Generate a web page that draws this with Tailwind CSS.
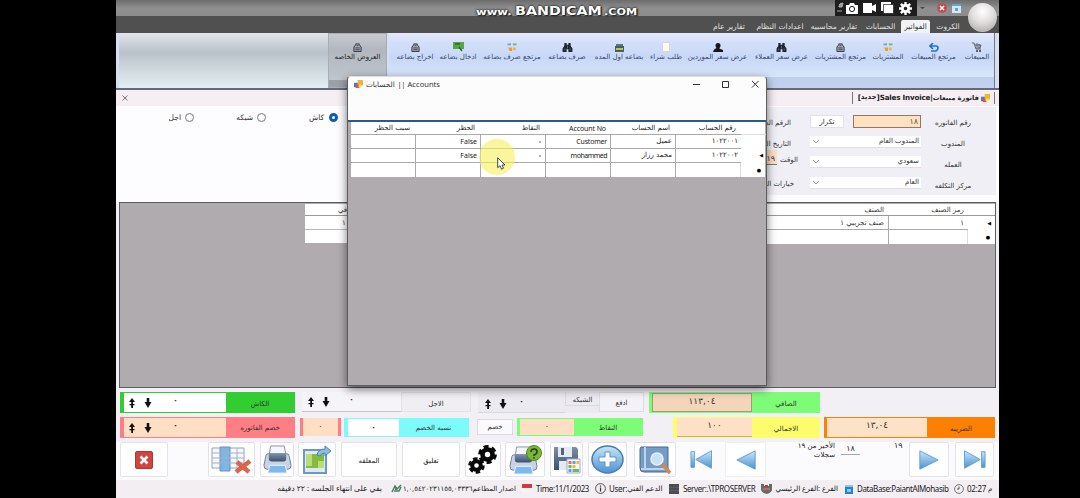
<!DOCTYPE html>
<html lang="ar">
<head>
<meta charset="utf-8">
<title>Sales Invoice</title>
<script src="https://cdn.jsdelivr.net/npm/@tailwindcss/browser@4"></script>
</head>
<body class="w-[1080px] h-[498px] overflow-hidden bg-black [font-family:'DejaVu_Sans',sans-serif] text-[7px] leading-none text-[#333] whitespace-nowrap">
<svg class="absolute w-0 h-0">
  <defs>
    <linearGradient id="blue" x1="0" y1="0" x2="0" y2="1"><stop offset="0" stop-color="#c9e6fa"/><stop offset="1" stop-color="#4c93d0"/></linearGradient>
    <linearGradient id="steel" x1="0" y1="0" x2="0" y2="1"><stop offset="0" stop-color="#7d8fa9"/><stop offset="1" stop-color="#3d506e"/></linearGradient>
  </defs>
  <symbol id="bag" viewBox="0 0 10 10"><path d="M1 4.500L3 2V1h4v1l2 2.500v5H1z" fill="#a5acbd" stroke="#2b2e38" stroke-width="1"/><path d="M2.500 5.500h5M2.500 7.500h5M4 3h2" stroke="#2b2e38" stroke-width=".9"/></symbol>
  <symbol id="people" viewBox="0 0 11 10"><path d="M2 0h2.500v2h2V0H9v3l2 3v4H6.500V7h-2v3H0V6l2-3z" fill="#1d2530"/><path d="M5 3h1v3H5zM2 6h1v2H2zM8 6h1v2H8z" fill="#59708c"/></symbol>
  <symbol id="cart4" viewBox="0 0 10 10"><path d="M0 1.500h4" stroke="#63a7cf" stroke-width="2"/><path d="M6 1.500h4" stroke="#7cb36a" stroke-width="2"/><path d="M1 5h4v4H2z" fill="#f29b25"/><path d="M6 5h3v3H6z" fill="#ecb23c"/></symbol>
  <symbol id="up" viewBox="0 0 8 10"><path d="M4 0L7 4H5v2h1.500v1.200H5V10H3.200V7.200H1.500V6h1.700V4H1z" fill="#111"/></symbol>
  <symbol id="down" viewBox="0 0 8 10"><path d="M2.700 0h2.600v4H7.500L4 10 .5 4h2.200z" fill="#111"/></symbol>
  <symbol id="win" viewBox="0 0 10 10"><path d="M0 3h5v5H0z" fill="#4d78c9"/><path d="M4 0h6v6H4z" fill="#f3b62b"/><path d="M2 5h4v4H2z" fill="#e0523b"/><path d="M5 5h3v3H5z" fill="#f9d978"/></symbol>
  <symbol id="chev" viewBox="0 0 8 5"><path d="M1 1l3 3 3-3" fill="none" stroke="#999" stroke-width=".9"/></symbol>
  <symbol id="play" viewBox="0 0 24 24"><path d="M2 2l20 10L2 22z" fill="url(#blue)" stroke="#5b9bd2" stroke-width="1"/></symbol>
  <symbol id="last" viewBox="0 0 28 24"><path d="M2 2l18 10L2 22z" fill="url(#blue)" stroke="#5b9bd2"/><path d="M21.500 3h4v18h-4z" fill="url(#blue)" stroke="#5b9bd2"/></symbol>
  <symbol id="printer" viewBox="0 0 30 30"><path d="M8 1h14l2 11H6z" fill="#f4f7fb" stroke="#8794a8"/><path d="M3 11q0-2 3-2h18q3 0 3 2l2 10q0 4-3 4H4q-3 0-3-4z" fill="#c9d3e4" stroke="#6d7f9d"/><path d="M6 9h18v5q0 3-3 3H9q-3 0-3-3z" fill="url(#steel)"/><path d="M7 21h16l2 8H5z" fill="#7fb8ea" stroke="#eef5fc"/></symbol>
</svg>

<main dir="ltr" class="relative ml-[116px] w-[883px] h-[498px] flex flex-col bg-[#f3f0f5]">
  <!-- title bar -->
  <header class="h-[16px] flex items-center bg-linear-to-b from-[#6c6c6c] via-[#8f8f8f] to-[#8d8d8d]">
    <div class="ml-[360px] w-[162px] mt-[6px] flex items-baseline text-white [text-shadow:0_0_2px_#222,0_0_2px_#222,1px_1px_1px_#222]">
      <span class="w-[39px] text-[9px] font-bold"><span class="inline-block origin-left scale-x-[1.28]">www.</span></span><span class="w-[88px] text-[12px] font-bold"><span class="inline-block origin-left scale-x-[1.19]">BANDICAM</span></span><span class="text-[8px] ml-[1px] font-bold"><span class="inline-block origin-left scale-x-[1.40]">.COM</span></span>
    </div>
    <div class="ml-[197px] w-[82px] h-[16px] bg-[#1d1d1d] flex items-center">
      <svg class="w-[9px] h-[12px]" viewBox="0 0 9 12"><path d="M4 4q0-3 4-3l-1 4H4zM2 9h5" stroke="#aaa" fill="#999"/></svg>
      <svg class="ml-[2px] w-[12px] h-[11px]" viewBox="0 0 12 11"><path d="M0 2h3l1-2h4l1 2h3v9H0z" fill="#fff"/><circle cx="6" cy="6" r="2.600" fill="#fff" stroke="#1d1d1d"/></svg>
      <svg class="ml-[5px] w-[13px] h-[10px]" viewBox="0 0 13 10"><path d="M0 0h9v3l4-2v8L9 7v3H0z" fill="#fff"/></svg>
      <svg class="ml-[5px] w-[13px] h-[12px]" viewBox="0 0 13 12"><path d="M0 0h10v9H0z" fill="#fff"/><path d="M2.500 2.500h10v9h-10z" fill="#fff" stroke="#1d1d1d" stroke-width=".7"/></svg>
      <svg class="ml-[5px] w-[13px] h-[13px]" viewBox="0 0 14 14"><path d="M7 0v14M0 7h14M2 2l10 10M12 2L2 12" stroke="#fff" stroke-width="2.600"/><circle cx="7" cy="7" r="3.400" fill="#1d1d1d" stroke="#fff" stroke-width="3"/></svg>
    </div>
    <svg class="ml-[3px] w-[5px] h-[4px]" viewBox="0 0 5 4"><path d="M0 1h5L2.500 3z" fill="#444"/></svg>
    <svg class="ml-[12px] w-[10px] h-[10px]" viewBox="0 0 10 10"><circle cx="5" cy="5" r="4.800" fill="#c9494b"/><path d="M3 3l4 4M7 3L3 7" stroke="#fff" stroke-width="1.500"/></svg>
    <svg class="ml-[5px] w-[9px] h-[9px]" viewBox="0 0 9 9"><path d="M0 0h9v9H0z" fill="#d5e8f8"/><path d="M0 0h9v2H0zM3 4h3v3H3z" fill="#5fa3e2"/></svg>
  </header>
  <div class="absolute left-[852px] top-[3px] w-[29px] h-[29px] rounded-full bg-[radial-gradient(circle_at_50%_30%,#fff,#e0dcdc_45%,#bdb9b9_75%,#e7e4e4)]"></div>

  <!-- tabs -->
  <nav class="h-[17px] bg-[#505050] flex text-[#e0e0e0] text-[7.500px]">
    <span class="ml-[590px] w-[46px] pt-[7px] text-center">تقارير عام</span>
    <span class="w-[56px] pt-[7px] text-center">اعدادات النظام</span>
    <span class="w-[52px] pt-[7px] text-center">تقارير محاسبيه</span>
    <span class="w-[41px] pt-[7px] text-center">الحسابات</span>
    <span class="mt-[4px] w-[29px] h-[13px] pt-[3px] text-center bg-[#f2f3f7] text-[#333] rounded-t-[2px]">الفواتير</span>
    <span class="w-[36px] pt-[7px] text-center">الكروت</span>
  </nav>

  <!-- ribbon -->
  <section class="h-[57px] pl-[3px] flex border-b-2 border-[#666a76] bg-[#d5e0f3] text-[7px] text-[#39456f]">
    <div class="w-[209px] bg-linear-to-b from-[#e4e5ec] via-[#bac2c9] via-35% to-[#e4f0f3]"></div>
    <div class="w-[59px] border border-[#a9adb8] bg-linear-to-b from-[#c7cad1] via-[#b2b7bf] via-30% to-[#c3c9cf] flex flex-col items-center pt-[9px] text-[#222]">
      <svg class="w-[9px] h-[9px]"><use href="#bag"/></svg><span class="mt-[2px]">العروض الخاصه</span><i class="mt-auto w-full h-[7px] bg-[#9da1a7]"></i>
    </div>
    <div class="ml-[2px] w-[606px] flex border-r border-[#777] bg-[linear-gradient(#e5e9fa,#d3dffa_18%,#c6d8f7_45%,#d9e6fb_80%,#becfea_81%,#c3d3ef)]">
      <div class="w-[47px] flex flex-col items-center pt-[10px] pl-[5px]"><svg class="w-[9px] h-[9px]"><use href="#bag"/></svg><span class="mt-[2px]">اخراج بضاعه</span></div>
      <div class="w-[44px] flex flex-col items-center pt-[9px]"><svg class="w-[11px] h-[10px]" viewBox="0 0 11 10"><path d="M0 0h11v7H0z" fill="#56a546"/><path d="M2 2h5M6 5l3 4" stroke="#2a6a2d" stroke-width="1.500"/></svg><span class="mt-[2px]">ادخال بضاعه</span></div>
      <div class="w-[64px] flex flex-col items-center pt-[10px]"><svg class="w-[10px] h-[9px]"><use href="#cart4"/></svg><span class="mt-[2px]">مرتجع صرف بضاعه</span></div>
      <div class="w-[46px] flex flex-col items-center pt-[10px]"><svg class="w-[11px] h-[9px]"><use href="#people"/></svg><span class="mt-[2px]">صرف بضاعه</span></div>
      <div class="w-[58px] flex flex-col items-center pt-[10px]"><svg class="w-[9px] h-[9px]" viewBox="0 0 9 9"><path d="M1 1h7v3H1z" fill="#5d7685"/><path d="M0 3h9v6H0z" fill="#46605b"/><path d="M1 5h7v2H1z" fill="#b9c35b"/></svg><span class="mt-[2px]">بضاعه اول المده</span></div>
      <div class="w-[36px] flex flex-col items-center pt-[9px]"><svg class="w-[8px] h-[10px]" viewBox="0 0 8 10"><path d="M.5.5h7v9h-7z" fill="#fbfaf2" stroke="#d6d6d2"/></svg><span class="mt-[2px]">طلب شراء</span></div>
      <div class="w-[67px] flex flex-col items-center pt-[10px]"><svg class="w-[10px] h-[9px]" viewBox="0 0 10 9"><circle cx="5" cy="2.500" r="2.500" fill="#15191f"/><path d="M3.500 3h3v3h-3zM0 9q1-4 5-4l5 2v2z" fill="#15191f"/></svg><span class="mt-[2px]">عرض سعر الموردين</span></div>
      <div class="w-[61px] flex flex-col items-center pt-[10px]"><svg class="w-[11px] h-[9px]"><use href="#people"/></svg><span class="mt-[2px]">عرض سعر العملاء</span></div>
      <div class="w-[57px] flex flex-col items-center pt-[10px]"><svg class="w-[9px] h-[9px]"><use href="#bag"/></svg><span class="mt-[2px]">مرتجع المشتريات</span></div>
      <div class="w-[38px] flex flex-col items-center pt-[10px]"><svg class="w-[10px] h-[9px]"><use href="#cart4"/></svg><span class="mt-[2px]">المشتريات</span></div>
      <div class="w-[53px] flex flex-col items-center pt-[10px]"><svg class="w-[10px] h-[9px]" viewBox="0 0 10 9"><path d="M4 0L1 3l3 3M1 3h6q2 0 2 2t-2 3H2" fill="none" stroke="#1f73c9" stroke-width="1.600"/></svg><span class="mt-[2px]">مرتجع المبيعات</span></div>
      <div class="w-[34px] flex flex-col items-center pt-[9px]"><svg class="w-[10px] h-[10px]" viewBox="0 0 10 10"><path d="M0 1h2l2 6h5M3 3h6L8 6H4M5 1v4M7 2v4" fill="none" stroke="#5b5f68" stroke-width="1"/><path d="M4 8h2v2H4zM7 8h2v2H7z" fill="#5b5f68"/></svg><span class="mt-[2px]">المبيعات</span></div>
    </div>
  </section>

  <!-- document tab -->
  <div class="h-[16px] pl-[6px] pr-[4px] flex items-center justify-between bg-[#f5eff4]">
    <svg class="w-[6px] h-[6px]" viewBox="0 0 6 6"><path d="M.5.5l5 5M5.500.5l-5 5" stroke="#555" stroke-width=".8"/></svg>
    <div class="h-[12px] w-[143px] border-x border-[#777] flex items-center justify-end gap-[2px] pr-[4px] text-[7.200px] font-bold text-[#222]">
      <span class="flex items-center tracking-[-0.200px]"><span>[</span><span class="text-[7px] tracking-normal">جديد</span><span>]Sales Invoice|</span><span class="text-[6.700px] tracking-normal">فاتورة مبيعات</span></span>
      <svg class="w-[9px] h-[9px] shrink-0"><use href="#win"/></svg>
    </div>
  </div>

  <!-- invoice form -->
  <section class="h-[96px] flex bg-[#fdfcfe]">
    <div class="w-[232px] pt-[7px] flex items-start text-[7.500px]">
      <div class="ml-[48px] w-[30px] flex items-center justify-end gap-[4px]"><span>اجل</span><i class="w-[9px] h-[9px] shrink-0 rounded-full border border-[#777]"></i></div>
      <div class="ml-[30px] w-[42px] flex items-center justify-end gap-[4px]"><span>شبكه</span><i class="w-[9px] h-[9px] shrink-0 rounded-full border border-[#777]"></i></div>
      <div class="ml-[30px] w-[42px] flex items-center justify-end gap-[5px]"><span>كاش</span><i class="w-[9px] h-[9px] shrink-0 rounded-full border-3 border-[#0d5fae] bg-white"></i></div>
    </div>
    <div class="ml-[379px] w-[269px] h-[88px] mt-[1px] bg-[#f0eff5] flex">
      <div dir="rtl" class="w-[72px] flex flex-col text-[7px]">
        <span class="h-[21px] pt-[13px] pr-[8px]">الرقم الضريبي</span>
        <span class="h-[21px] pt-[13px] pr-[8px]">التاريخ الهجري</span>
        <span class="h-[19px] flex mt-[1px] pr-[1px]"><span class="pt-[7px] w-[21px]">الوقت</span><b class="w-[30px] h-[15px] pt-[5px] pr-[2px] bg-[#fce0c4] border-b border-[#777] text-[8px] font-normal">١٩</b></span>
        <span class="pt-[12px] pr-[5px]">خيارات الطباعة</span>
      </div>
      <div class="ml-[11px] w-[111px] pt-[8px] flex flex-col">
        <div class="h-[13px] flex justify-between">
          <span class="w-[34px] h-[13px] bg-white border border-[#e3e1e8] text-center pt-[3px]">تكرار</span>
          <span class="w-[68px] bg-[#fde2bf] border border-[#9a7468] text-right pt-[2px] pr-[2px] text-[8px] text-[#555]">١٨</span>
        </div>
        <div class="mt-[8px] h-[12px] px-[2px] bg-white border-b border-[#e0dfe5] flex items-center justify-between"><svg class="w-[8px] h-[5px]"><use href="#chev"/></svg><span>المندوب العام</span></div>
        <div class="mt-[8px] h-[12px] px-[2px] bg-white border-b border-[#e0dfe5] flex items-center justify-between"><svg class="w-[8px] h-[5px]"><use href="#chev"/></svg><span>سعودي</span></div>
        <div class="mt-[9px] h-[12px] px-[2px] bg-white border-b border-[#e0dfe5] flex items-center justify-between"><svg class="w-[8px] h-[5px]"><use href="#chev"/></svg><span>العام</span></div>
      </div>
      <div class="w-[64px] pt-[13px] flex flex-col items-center gap-[14px]"><span>رقم الفاتوره</span><span>المندوب</span><span>العمله</span><span>مركز التكلفه</span></div>
    </div>
  </section>

  <!-- invoice lines -->
  <section class="ml-[3px] w-[877px] h-[186px] pt-[1px] flex items-start justify-between border border-[#5f5c61] bg-[#afabae]">
    <div class="ml-[185px] w-[70px]">
      <div class="h-[12px] pt-[3px] pl-[33px] bg-white border-b border-[#999]">الصافي</div><div class="h-[14px] pt-[4px] pl-[37px] bg-white border-b border-[#bbb]">١٠٠</div><div class="h-[13px] bg-white"></div>
    </div>
    <div class="w-[228px] grid grid-cols-[122px_79px_27px] bg-white text-right">
      <span class="h-[12px] pt-[3px] pr-[5px] border-b border-[#999]">الصنف</span><span class="pt-[3px] pr-[4px] border-b border-[#999]">رمز الصنف</span><span class="border-b border-[#999]"></span>
      <span class="h-[14px] pt-[4px] pr-[4px] border-b border-r border-[#aaa]">صنف تجريبي ١</span><span class="pt-[4px] pr-[4px] border-b border-[#aaa]">١</span><span class="pt-[5px] pr-[4px] text-[5px] text-black">◀</span>
      <span class="h-[14px] border-r border-[#aaa]"></span><span class="border-r border-[#ddd]"></span><span class="pt-[5px] pr-[5px] text-[5px] text-black">●</span>
    </div>
  </section>

  <!-- totals, first row -->
  <section class="pt-[4px] h-[26px] flex items-start text-[7px]">
    <div class="ml-[4px] w-[175px] h-[21px] flex bg-[#32cd32] p-[1px] pl-[4px]">
      <div class="w-[102px] bg-white flex items-center pl-[4px] gap-[8px]"><svg class="w-[8px] h-[10px]"><use href="#up"/></svg><svg class="w-[8px] h-[10px]"><use href="#down"/></svg><span class="ml-[13px] -mt-[3px] text-[8px] font-bold">٠</span></div><span class="grow text-center pt-[8px]">الكاش</span></div>
    <div class="ml-[7px] w-[169px] h-[20px] flex bg-[#f5f4f8]">
      <div class="w-[99px] border-b border-[#c4c4ca] flex items-center pl-[5px] gap-[7px]"><svg class="w-[8px] h-[10px]"><use href="#up"/></svg><svg class="w-[8px] h-[10px]"><use href="#down"/></svg><span class="ml-[12px] -mt-[3px] text-[8px] font-bold">٠</span></div><span class="grow text-center pt-[8px] bg-[#efeff3] border border-[#e2e2e7]">الاجل</span></div>
    <div class="ml-[7px] w-[121px] h-[21px] flex bg-[#ebeaf0]">
      <div class="w-[87px] border-b border-[#d8d8dd] flex items-center pt-[4px] pl-[6px] gap-[7px]"><svg class="w-[8px] h-[10px]"><use href="#up"/></svg><svg class="w-[8px] h-[10px]"><use href="#down"/></svg><span class="ml-[5px] -mt-[4px] text-[8px] font-bold">٠</span></div><span class="h-[14px] grow text-center pt-[5px] border-b border-l border-[#d8d8dd]">الشبكه</span></div>
    <span class="w-[45px] h-[20px] text-center pt-[7px] bg-[#f3f2f6] border border-[#dedde3]">ادفع</span>
    <div class="ml-[5px] w-[171px] h-[21px] flex bg-[#7dfc77] py-[1px] pl-[3px]"><span class="w-[100px] bg-[#f3d5ba] border border-[#9b9e7c] text-center pt-[3px] text-[9px]">١١٣,٠٤</span><span class="grow text-center pt-[8px]">الصافي</span></div>
  </section>

  <!-- totals, second row -->
  <section class="pt-[3px] h-[28px] flex items-start text-[7px]">
    <div class="ml-[4px] w-[175px] h-[21px] flex bg-[#fd7e84] p-[1px] pl-[4px]">
      <div class="w-[102px] bg-[#fedfc4] flex items-center pl-[4px] gap-[8px]"><svg class="w-[8px] h-[10px]"><use href="#up"/></svg><svg class="w-[8px] h-[10px]"><use href="#down"/></svg><span class="ml-[13px] -mt-[4px] text-[8px] font-bold">٠</span></div><span class="grow text-center pt-[7px]">خصم الفاتوره</span></div>
    <div class="ml-[5px] mt-[1px] w-[41px] h-[18px] px-[3px] bg-[#fd7e84] flex"><span class="grow bg-[#fedfc4] text-center pt-[5px] text-[8px]">٠</span></div>
    <div class="ml-[3px] mt-[1px] w-[125px] h-[19px] p-[1px] pl-[4px] bg-[#7dfbfb] flex"><span class="w-[51px] bg-white text-center pt-[5px] text-[8px] font-bold">٠</span><span class="grow text-center pt-[6px]">نسبه الخصم</span></div>
    <span class="ml-[8px] mt-[2px] w-[36px] h-[16px] bg-[#faf9fb] border border-[#dcdbe0] text-center pt-[4px]">خصم</span>
    <div class="ml-[4px] mt-[1px] w-[126px] h-[18px] p-[1px] pl-[3px] bg-[#7dfc77] flex"><span class="w-[54px] bg-[#fedfc4] text-center pt-[4px] text-[8px]">٠</span><span class="grow text-center pt-[6px]">النقاط</span></div>
    <div class="ml-[30px] w-[147px] h-[21px] flex bg-[#fdfd6c] py-[1px] pl-[4px]"><span class="w-[75px] bg-[#fee0c6] border-b border-[#b9ad94] text-center pt-[3px] text-[9px]">١٠٠</span><span class="grow text-center pt-[8px]">الاجمالي</span></div>
    <div class="ml-[4px] w-[171px] h-[21px] flex bg-[#fe8000] py-[1px] pl-[3px]"><span class="w-[100px] bg-[#fee2c8] text-center pt-[3px] text-[9px]">١٣,٠٤</span><span class="grow text-center pt-[8px]">الضريبه</span></div>
  </section>

  <!-- commands -->
  <section class="h-[38px] flex items-start text-[7px] bg-[#fbfafc] text-[#222]">
    <div class="ml-[4px] w-[48px] h-[35px] border border-[#e3e2e8] bg-white rounded-[2px] flex items-center justify-center"><svg class="w-[18px] h-[18px]" viewBox="0 0 18 18"><rect x=".5" y=".5" width="17" height="17" rx="1.500" fill="#d0453d" stroke="#a93a34"/><path d="M5.500 5.500l7 7M12.500 5.500l-7 7" stroke="#fff" stroke-width="2.600"/></svg></div>
    <div class="ml-[40px] w-[47px] h-[35px] border border-[#e3e2e8] bg-white rounded-[2px] flex items-center justify-center"><svg class="w-[41px] h-[28px]" viewBox="0 0 41 28"><path d="M1 2h32v20H1z" fill="#f7f9fd" stroke="#8fa2c6"/><path d="M9 1h10v24H9z" fill="#80b5e3" stroke="#6890c0"/><path d="M1 7h32M1 12h32M1 17h32M26 2v20" stroke="#9fb0d0"/><path d="M26 16l12 10M39 15L25 26" stroke="#d9664b" stroke-width="4.500"/></svg></div>
    <div class="ml-[5px] w-[34px] h-[35px] border border-[#e3e2e8] bg-white rounded-[2px] flex items-center justify-center"><svg class="w-[29px] h-[29px]"><use href="#printer"/></svg></div>
    <div class="ml-[4px] w-[38px] h-[35px] border border-[#e3e2e8] bg-white rounded-[2px] flex items-center justify-center"><svg class="w-[30px] h-[30px]" viewBox="0 0 30 30"><path d="M2 5h22v23H2z" fill="#dce9f6" stroke="#6e98c3" stroke-width="2"/><path d="M4 9h18v14H4z" fill="#84bd3c"/><path d="M4 9h6v12H4zM16 16h6v7h-6z" fill="#b8dd78"/><path d="M15 10q1-6 8-6V1l6 5-6 5V8q-4 0-5 3z" fill="#8ebce2" stroke="#4c81b4"/></svg></div>
    <div class="ml-[5px] w-[56px] h-[35px] border border-[#e3e2e8] bg-white rounded-[2px] text-center pt-[15px]">المعلقه</div>
    <div class="ml-[5px] w-[58px] h-[35px] border border-[#e3e2e8] bg-white rounded-[2px] text-center pt-[15px]">تعليق</div>
    <div class="ml-[5px] w-[36px] h-[35px] border border-[#e3e2e8] bg-white rounded-[2px] flex items-center justify-center"><svg class="w-[30px] h-[30px]" viewBox="0 0 30 30"><g fill="none" stroke="#080808"><circle cx="19.500" cy="9.500" r="5" stroke-width="4.600"/><circle cx="19.500" cy="9.500" r="7.900" stroke-width="3" stroke-dasharray="5 3.270"/><circle cx="8.500" cy="20.500" r="4.300" stroke-width="4"/><circle cx="8.500" cy="20.500" r="6.900" stroke-width="2.800" stroke-dasharray="4.400 2.820"/></g></svg></div>
    <div class="ml-[4px] w-[40px] h-[35px] border border-[#e3e2e8] bg-white rounded-[2px] flex items-center justify-center"><svg class="w-[34px] h-[30px]" viewBox="0 0 34 30"><use href="#printer" x="0" y="1" width="31" height="29"/><circle cx="26" cy="8" r="7.500" fill="#78b833" stroke="#538b24"/><path d="M23 7q0-3 3-3t3 2.500-3 3.500v1M26 12v1.500" fill="none" stroke="#26421a" stroke-width="1.600"/></svg></div>
    <div class="ml-[5px] w-[33px] h-[35px] border border-[#e3e2e8] bg-white rounded-[2px] flex items-center justify-center"><svg class="w-[28px] h-[28px]" viewBox="0 0 28 28"><path d="M1 1h22l2 2v21H1z" fill="url(#steel)"/><path d="M5 1h14v10H5zM6 15h13v9H6z" fill="#e5eaf2"/><path d="M8 2h3v7H8z" fill="#53637e"/><path d="M14 13h13v14H14z" fill="#f8f9fc" stroke="#9eacc5"/><path d="M15.500 15h3v3h-3z" fill="#e26e53"/><path d="M19.500 15h3v3h-3zM15.500 23h3v3h-3z" fill="#5d9ee2"/><path d="M23.500 15h2.500v3h-2.500zM19.500 19h3v3h-3z" fill="#efb43a"/><path d="M15.500 19h3v3h-3zM19.500 23h6.500v3h-6.500z" fill="#70b661"/></svg></div>
    <div class="ml-[5px] w-[39px] h-[35px] border border-[#e3e2e8] bg-white rounded-[2px] flex items-center justify-center"><svg class="w-[33px] h-[29px]" viewBox="0 0 33 29"><ellipse cx="16.500" cy="14.500" rx="15.500" ry="13.500" fill="url(#blue)" stroke="#477cb5" stroke-width="1.500"/><path d="M14 7h5v5h6v5h-6v5h-5v-5H8v-5h6z" fill="#fff" stroke="#5a94c9"/></svg></div>
    <div class="ml-[7px] w-[42px] h-[35px] border border-[#e3e2e8] bg-white rounded-[2px] flex items-center justify-center"><svg class="w-[33px] h-[30px]" viewBox="0 0 33 30"><path d="M2 2h27v25H5q-4 0-4-4V4z" fill="#739cc7" stroke="#48698f"/><path d="M6 2v21M2 24h27" stroke="#d9e6f4" stroke-width="1.500"/><circle cx="18" cy="14" r="6" fill="#c7e1f6" stroke="#e9f0f7" stroke-width="1.500"/><path d="M23 19l8 9" stroke="#cf8954" stroke-width="3.500"/></svg></div>
    <div class="ml-[4px] w-[42px] h-[35px] flex items-center justify-center"><svg class="w-[28px] h-[21px] -scale-x-100"><use href="#last"/></svg></div>
    <div class="ml-[3px] w-[41px] h-[35px] border border-[#f0eff3] bg-white flex items-center justify-center"><svg class="w-[22px] h-[22px] -scale-x-100"><use href="#play"/></svg></div>
    <div dir="rtl" class="ml-[29px] w-[40px] leading-[9px]">الأخير من ١٩<br>سجلات</div>
    <div class="ml-[6px] w-[19px] h-[13px] pt-[3px] border-b border-[#aaa] text-center text-[8px]">١٨</div>
    <div class="ml-[34px] w-[10px] text-[8px]">١٩</div>
    <div class="ml-[5px] w-[40px] h-[35px] border border-[#e3e2e8] bg-white rounded-[2px] flex items-center justify-center"><svg class="w-[22px] h-[22px]"><use href="#play"/></svg></div>
    <div class="ml-[6px] w-[39px] h-[35px] border border-[#e3e2e8] bg-white rounded-[2px] flex items-center justify-center"><svg class="w-[28px] h-[21px]"><use href="#last"/></svg></div>
  </section>

  <!-- status bar -->
  <footer class="h-[17px] flex items-center bg-[#f2eef2] [font-family:'Noto_Sans','DejaVu_Sans',sans-serif] text-[8px] text-[#222]">
    <span dir="rtl" class="ml-[161px] w-[105px] shrink-0 text-[7.700px]">بقي على انتهاء الجلسه : ٢٢ دقيقه</span>
    <svg class="ml-[9px] w-[11px] h-[9px] shrink-0" viewBox="0 0 11 9"><path d="M1 8l3-6 2 3 4-4M3 7h5l2-4" fill="none" stroke="#3c8472" stroke-width="1.500"/><path d="M4 4h2v2H4z" fill="#c9542f"/></svg>
    <span dir="rtl" class="ml-[2px] w-[112px] shrink-0 text-[7px]">اصدار المطاعم١,٠,٥٤٢٠٢٣١١٥٥,٠٣٣٣٦</span>
    <svg class="ml-[6px] w-[10px] h-[10px] shrink-0" viewBox="0 0 10 10"><path d="M0 1h10v8H0z" fill="#f6f3f3"/><path d="M0 0h10v4H0z" fill="#cf3c40"/></svg>
    <span class="ml-[4px] w-[53px] shrink-0 tracking-[-0.400px]">Time:11/1/2023</span>
    <svg class="ml-[6px] w-[11px] h-[11px] shrink-0" viewBox="0 0 11 11"><circle cx="5.500" cy="5.500" r="4.900" fill="none" stroke="#555"/><path d="M5.500 4.500V8.500M5.500 2.500v1.200" stroke="#333" stroke-width="1.200"/></svg>
    <span class="ml-[3px] w-[54px] shrink-0 flex items-center tracking-[-0.300px]"><span>User:</span><span class="text-[7.300px] tracking-normal">الدعم الفني</span></span>
    <svg class="ml-[6px] w-[10px] h-[10px] shrink-0" viewBox="0 0 10 10"><path d="M0 0h10v10H0z" fill="#4d4d50"/><path d="M0 3.300h10M0 6.600h10" stroke="#777" stroke-width=".5"/></svg>
    <span class="ml-[4px] w-[72px] shrink-0 tracking-[-0.400px]">Server:.\TPROSERVER</span>
    <svg class="ml-[6px] w-[11px] h-[10px] shrink-0" viewBox="0 0 11 10"><path d="M0 0h3v2h5V0h3v6q-1 3-5.500 4Q1 9 0 6z" fill="#59706b"/><path d="M2 4h7v2H2z" fill="#da6150"/><path d="M4 1h3v2H4z" fill="#b73e42"/></svg>
    <span dir="rtl" class="ml-[3px] w-[63px] shrink-0 text-[7.200px]">الفرع :الفرع الرئيسي</span>
    <svg class="ml-[6px] w-[10px] h-[10px] shrink-0" viewBox="0 0 10 10"><path d="M1 1h8v9H1z" fill="#2a7fd0"/><path d="M1 1h8v2H1zM3 5h4v3H3z" fill="#8ac6f2"/></svg>
    <span class="ml-[3px] w-[91px] shrink-0 tracking-[-0.400px]">DataBase:PaiantAlMohasib</span>
    <svg class="ml-[6px] w-[10px] h-[10px] shrink-0" viewBox="0 0 10 10"><circle cx="5" cy="5" r="4.400" fill="none" stroke="#777"/><path d="M5 2.500V5H3" fill="none" stroke="#555"/></svg>
    <span dir="ltr" class="ml-[3px] flex items-center gap-[2px] tracking-[-0.300px]"><span>02:27</span><span class="text-[7px]">م</span></span>
  </footer>

  <!-- accounts dialog -->
  <div class="absolute left-[231px] top-[76px] w-[420px] h-[310px] flex flex-col rounded-t-[4px] border border-[#5c5c61] border-t-[#ddd] bg-[#afabae] shadow-[0_3px_10px_rgba(0,0,0,0.55)] overflow-hidden">
    <div class="h-[45px] bg-[#fdfcfd] border-b-2 border-[#245c8e] flex items-start pt-[2px] px-[6px]">
      <svg class="mt-[1px] w-[9px] h-[9px]"><use href="#win"/></svg>
      <div class="ml-[3px] w-[74px] flex justify-between items-center text-[7.600px] [font-family:'Noto_Sans','DejaVu_Sans',sans-serif] leading-[11px]"><span class="text-[7.300px]">الحسابات</span><span class="tracking-[-0.500px]">||</span><span>Accounts</span></div>
      <svg class="ml-auto mt-[1px] w-[69px] h-[9px]" viewBox="0 0 69 9"><path d="M2 4.500h7M31.500 1.500h6v6h-6zM61 1l6.500 6.500M67.500 1L61 7.500" fill="none" stroke="#333" stroke-width="1"/></svg>
    </div>
    <div class="ml-[3px] mr-[1px] grid grid-cols-[65px_65px_65px_65px_65px_65px_25px] bg-white text-right text-[7px] text-[#222]">
      <span class="h-[13px] pt-[3px] pr-[6px] border-b border-[#aaa]">سبب الحظر</span><span class="pt-[3px] pr-[6px] border-b border-[#aaa]">الحظر</span><span class="pt-[3px] pr-[6px] border-b border-[#aaa]">النقاط</span><span class="pt-[3px] pr-[5px] border-b border-[#aaa] [font-family:'Noto_Sans'] tracking-[-0.100px]">Account No</span><span class="pt-[3px] pr-[6px] border-b border-[#aaa]">اسم الحساب</span><span class="pt-[3px] pr-[5px] border-b border-[#aaa]">رقم الحساب</span><span class="border-b border-[#ddd]"></span>
      <span class="h-[14px] border-b border-r border-[#aaa]"></span><span class="pt-[3px] pr-[3px] border-b border-r border-[#aaa] [font-family:'Noto_Sans']">False</span><span class="pt-[4px] pr-[3px] border-b border-r border-[#aaa] font-bold">٠</span><span class="pt-[3px] pr-[3px] border-b border-r border-[#aaa] [font-family:'Noto_Sans'] tracking-[-0.200px]">Customer</span><span class="pt-[3px] pr-[3px] border-b border-r border-[#aaa]">عميل</span><span class="pt-[3px] pr-[3px] border-b border-[#aaa]">١٠٢٢٠٠١</span><span></span>
      <span class="h-[14px] border-b border-r border-[#aaa]"></span><span class="pt-[3px] pr-[3px] border-b border-r border-[#aaa] [font-family:'Noto_Sans']">False</span><span class="pt-[4px] pr-[3px] border-b border-r border-[#aaa] font-bold">٠</span><span class="pt-[3px] pr-[3px] border-b border-r border-[#aaa] [font-family:'Noto_Sans'] tracking-[-0.500px]">mohammed</span><span class="pt-[3px] pr-[3px] border-b border-r border-[#aaa]">محمد رزاز</span><span class="pt-[3px] pr-[3px] border-b border-[#aaa]">١٠٢٢٠٠٢</span><span class="pt-[4px] pr-[3px] text-[5px] text-black">◀</span>
      <span class="h-[14px] border-r border-[#aaa]"></span><span class="border-r border-[#aaa]"></span><span class="border-r border-[#aaa]"></span><span class="border-r border-[#aaa]"></span><span class="border-r border-[#aaa]"></span><span class="border-r border-[#ddd]"></span><span class="pt-[5px] pr-[5px] text-[5px] text-black">●</span>
    </div>
    <div class="absolute left-[131px] top-[62px] w-[36px] h-[36px] rounded-full bg-[#f7f05a]/60"></div>
    <svg class="absolute left-[149px] top-[80px] w-[9px] h-[13px]" viewBox="0 0 9 13"><path d="M.7.7v10l2.300-2 1.500 3.500 2-1L5 8h3z" fill="#fff" stroke="#444"/></svg>
  </div>
</main>
</body>
</html>
